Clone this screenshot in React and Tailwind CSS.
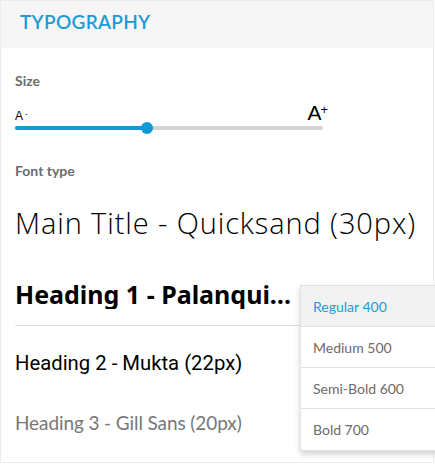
import React from 'react';

const weights = [
  { label: 'Regular 400', active: true },
  { label: 'Medium 500' },
  { label: 'Semi-Bold 600' },
  { label: 'Bold 700' },
];

export default function App() {
  return (
    <div className="relative w-[435px] h-[464px] bg-white overflow-hidden">
      <div className="w-[434px] h-[463px] border border-[#e8eef0] bg-white font-['Lato',sans-serif]">
        <div className="h-[47px] bg-[#f6f6f6] pl-[19px] pt-[9px]">
          <h1 className="text-[19px] leading-[24px] font-semibold tracking-[0.3px] text-[#1a9bd8] uppercase">
            Typography
          </h1>
        </div>

        <div className="px-[14px]">
          <div className="mt-[24px] text-[14px] leading-[17px] font-bold text-[#6b6b6b]">Size</div>

          <div className="mt-[12px] w-[313px] h-[24px] flex items-baseline justify-between font-['Liberation_Sans',sans-serif] text-black">
            <span className="text-[12px] leading-[24px]">
              A<sup className="text-[8px] ml-[2px]">-</sup>
            </span>
            <span className="text-[21px] leading-[24px]">
              A<sup className="text-[13px] -ml-[1px]">+</sup>
            </span>
          </div>

          <div className="relative mt-[1px] w-[308px] h-[4px] rounded-full bg-[#d3d3d3]">
            <div className="h-full w-[132px] rounded-full bg-[#0f9ad6]" />
            <div className="absolute left-[126px] -top-[4px] w-[12px] h-[12px] rounded-full bg-[#0f9ad6]" />
          </div>

          <div className="mt-[32px] text-[14px] leading-[17px] font-bold text-[#6b6b6b]">Font type</div>

          <div className="mt-[26px] text-[29px] leading-[36px] tracking-[0.9px] font-light text-black font-['Open_Sans',sans-serif] whitespace-nowrap">
            Main Title - Quicksand (30px)
          </div>

          <div className="mt-[38px] pb-[16px] border-b border-[#dedede]">
            <div className="w-[292px] overflow-hidden text-ellipsis whitespace-nowrap text-[25px] leading-[30px] font-bold text-black font-['Noto_Sans',sans-serif]">
              Heading 1 - Palanquin (24px)
            </div>
          </div>

          <div className="mt-[23px] text-[20.3px] leading-[28px] text-black font-['Roboto',sans-serif]">
            Heading 2 - Mukta (22px)
          </div>

          <div className="mt-[33px] text-[19px] leading-[26px] tracking-[-0.1px] text-[#777777]">
            Heading 3 - Gill Sans (20px)
          </div>
        </div>
      </div>

      <ul className="absolute left-[300px] top-[285px] w-[140px] bg-white border border-[#e2e2e2] shadow-[0_3px_6px_rgba(0,0,0,0.18)] font-['Lato',sans-serif]">
        {weights.map((w, i) => (
          <li
            key={w.label}
            className={
              'h-[41px] pl-[12px] flex items-center text-[14px] ' +
              (i < weights.length - 1 ? 'border-b border-[#e2e2e2] ' : '') +
              (w.active ? 'bg-[#f2f2f2] text-[#1a9bd8]' : 'text-[#6b6b6b]')
            }
          >
            {w.label}
          </li>
        ))}
      </ul>
    </div>
  );
}
